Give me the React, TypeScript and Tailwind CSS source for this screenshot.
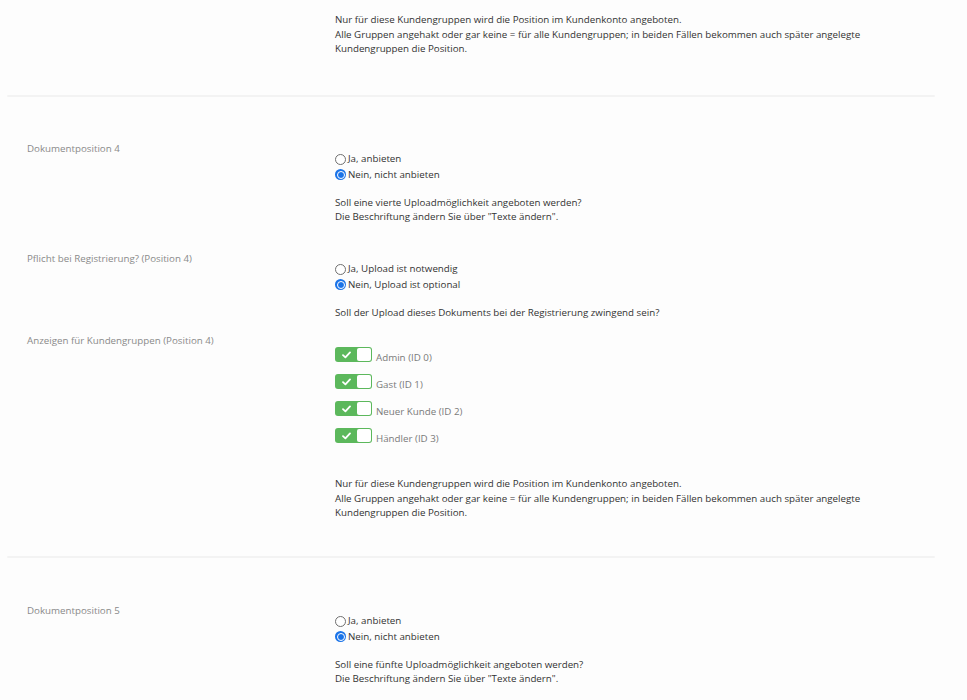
import React from 'react';

const Radio = ({ checked, label }: { checked?: boolean; label: string }) => (
  <div className="flex items-center h-[15.5px] gap-[2px]">
    {checked ? (
      <span className="w-[11px] h-[11px] rounded-full bg-[#1a73e8] p-[1.5px] shrink-0">
        <span className="block w-full h-full rounded-full bg-[#1a73e8] border-[1.5px] border-white" />
      </span>
    ) : (
      <span className="w-[11px] h-[11px] rounded-full border border-[#6f6f6f] bg-white shrink-0" />
    )}
    <span>{label}</span>
  </div>
);

const Toggle = ({ label }: { label: string }) => (
  <div className="flex items-start h-[27px]">
    <span className="flex items-center w-[37px] h-[15px] rounded-[3px] bg-[#5cb85c] shrink-0">
      <span className="flex-1 flex justify-center">
        <svg width="9" height="8" viewBox="0 0 9 8" fill="none">
          <path d="M1 4.2 L3.4 6.4 L8 1.4" stroke="white" strokeWidth="1.8" strokeLinecap="round" strokeLinejoin="round" />
        </svg>
      </span>
      <span className="w-[14px] h-[13px] mr-[1px] bg-white rounded-[2px]" />
    </span>
    <span className="mt-[4px] ml-[4px] text-[#7a7a7a]">{label}</span>
  </div>
);

const GroupHelp = () => (
  <div>
    Nur für diese Kundengruppen wird die Position im Kundenkonto angeboten.
    <br />
    Alle Gruppen angehakt oder gar keine = für alle Kundengruppen; in beiden Fällen bekommen auch später angelegte
    Kundengruppen die Position.
  </div>
);

const Row = ({ label, children, offset = true }: { label: string; children: React.ReactNode; offset?: boolean }) => (
  <div className="flex">
    <div className="w-[328px] pl-[20px] text-[#8a8a8a] shrink-0">{label}</div>
    <div className={`w-[540px] ${offset ? 'pt-[10px]' : ''}`}>{children}</div>
  </div>
);

const Divider = () => <div className="h-[2px] bg-[#f3f3f3] rounded-full" />;

export default function App() {
  return (
    <div
      className="min-h-[700px] bg-[#fdfdfd] text-[#333333] text-[9.75px] leading-[14.5px] overflow-hidden"
      style={{ fontFamily: '"Open Sans", "Noto Sans", Arial, sans-serif' }}
    >
      <div className="ml-[7px] w-[928px]">
        {/* tail of position 3 */}
        <div className="pt-[13px] pb-[38px]">
          <Row label="" offset={false}>
            <GroupHelp />
          </Row>
        </div>
        <Divider />

        {/* Position 4 */}
        <div className="pt-[45px] pb-[35px] flex flex-col gap-[28px]">
          <Row label="Dokumentposition 4">
            <Radio label="Ja, anbieten" />
            <Radio checked label="Nein, nicht anbieten" />
            <div className="mt-[13px]">
              Soll eine vierte Uploadmöglichkeit angeboten werden?
              <br />
              Die Beschriftung ändern Sie über "Texte ändern".
            </div>
          </Row>
          <div className="-mt-[1px]">
            <Row label="Pflicht bei Registrierung? (Position 4)">
              <Radio label="Ja, Upload ist notwendig" />
              <Radio checked label="Nein, Upload ist optional" />
              <div className="mt-[13px]">Soll der Upload dieses Dokuments bei der Registrierung zwingend sein?</div>
            </Row>
          </div>
          <div className="-mt-[14px]">
            <Row label="Anzeigen für Kundengruppen (Position 4)" offset={false}>
              <div className="pt-[13px]">
                <Toggle label="Admin (ID 0)" />
                <Toggle label="Gast (ID 1)" />
                <Toggle label="Neuer Kunde (ID 2)" />
                <Toggle label="Händler (ID 3)" />
              </div>
              <div className="mt-[22px]">
                <GroupHelp />
              </div>
            </Row>
          </div>
        </div>
        <Divider />

        {/* Position 5 */}
        <div className="pt-[46px]">
          <Row label="Dokumentposition 5">
            <Radio label="Ja, anbieten" />
            <Radio checked label="Nein, nicht anbieten" />
            <div className="mt-[13px]">
              Soll eine fünfte Uploadmöglichkeit angeboten werden?
              <br />
              Die Beschriftung ändern Sie über "Texte ändern".
            </div>
          </Row>
        </div>
      </div>
    </div>
  );
}
